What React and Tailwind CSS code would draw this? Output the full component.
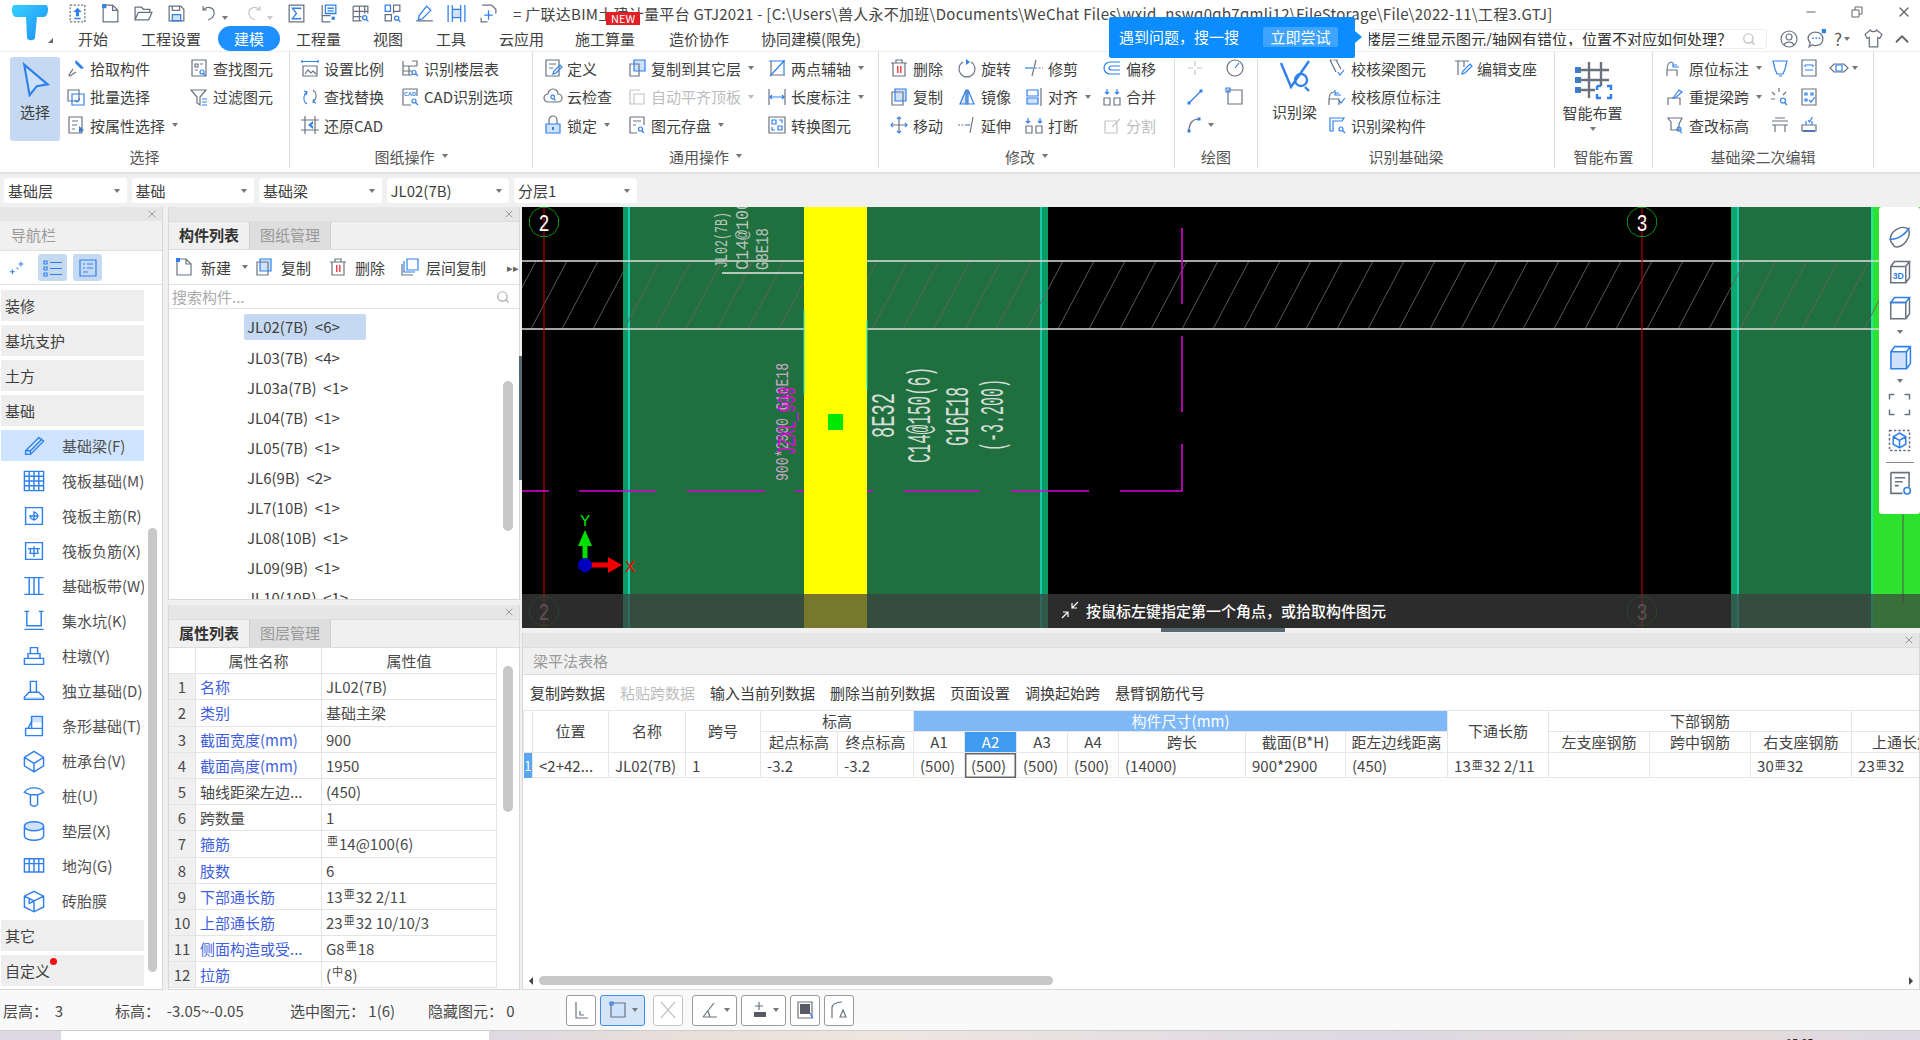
import { ChevronUp, Minus, Search, X } from 'lucide-react';

const ICONS = {
  upload: { d: 'M3 2h14v16H3z', n: 'M10 4.5l-4 4h2.5v4h3v-4H14zM7 14h6v1.5H7z' },
  newDoc: { g: 'M5 2h7l5 5v11H3V5M12 2v5h5', n: 'M2 1h4v4H2z' },
  open: { g: 'M2 16V4h6l2 2h6v3M2 16l3-7h13l-3 7z' },
  save: { g: 'M3 3h11l3 3v11H3zM6 3v4h7V3', f: 'M6 11h8v6H6z', b: 'M6 11h8v6H6z' },
  undo: { g: 'M4 7c5-5 12-2 11 4-.5 3-3 5-6 6M4 3v4h4' },
  redo: { g: 'M16 7c-5-5-12-2-11 4 .5 3 3 5 6 6M16 3v4h-4' },
  sigma: { g: 'M3 2h14v16H3z', b: 'M14 6V5H6l4 5-4 5h8v-1' },
  report: { g: 'M4 2v16h8M4 12h8', b: 'M7 2h10v8H7zM9 5h6M9 7.5h6', n: 'M13 13h3v3h-3z' },
  tableFind: { g: 'M3 3h14v7M3 3v14h8M3 8h14M3 13h8M9 3v14M14 3v7', b: 'M17.5 17.5l-2-2M16 14a2 2 0 1 1-4 0 2 2 0 0 1 4 0z' },
  treeFind: { g: 'M11 2h6v6h-6zM3 11h6v6H3zM11 8v2', b: 'M3 2h5v6H3zM17.5 18l-2-2M16 14.5a2 2 0 1 1-4 0 2 2 0 0 1 4 0z' },
  pen: { g: 'M2 17h16', b: 'M12 3l4 4-8 8-4 1 1-4z' },
  columns: { b: 'M2 2v16M18 2v16M6 2v16M14 2v16M6 6h8M6 14h8', f: 'M6 6h8v8H6z' },
  plusDoc: { g: 'M4 2h9l4 4v4M3 14v4h6', b: 'M10 7v9M6 11.5h8' },
  cursor: { b: 'M4 2l13 11-6 1-4 5z', f: 'M4 2l13 11-6 1-4 5z' },
  dropper: { g: 'M7 11l-4 6 1 1 6-4', n: 'M10 2l8 8-3 1-6-6z' },
  multi: { g: 'M2 3h11v11H2z', b: 'M6 7h12v11H6zM9 13l2 2 3-4' },
  attr: { g: 'M3 2h13v16H3zM6 6h6M6 10h5M6 14h3', n: 'M13 11l5 4-5 3z' },
  findDoc: { g: 'M3 2h14v16H3zM6 6h3v3H6zM11 6h3M6 12h3', b: 'M16.5 18l-2-2M15 14a2 2 0 1 1-4 0 2 2 0 0 1 4 0z' },
  filter: { g: 'M2 3h15l-6 7v8l-3-2v-6z', b: 'M13 12h5M13 15h5M13 18h5' },
  scale: { g: 'M3 8h14v10H3zM5 16l3-4 3 3 2-2 3 3', b: 'M2 2v3M18 2v3M2 3.5h16' },
  floorFind: { g: 'M3 3v14h9M3 8h14M3 13h9M9 8v9M12 3h5v5', b: 'M18 18l-2-2M16 14.5a2 2 0 1 1-4 0 2 2 0 0 1 4 0z' },
  swap: { g: 'M13 3c3 2 4 6 2 10l-2 2', b: 'M7 17c-3-2-4-6-2-10l2-2M4 4l3 1-1 3M16 16l-3-1 1-3' },
  cadFind: { g: 'M3 2h14v7M3 2v16h8', b: 'M18 18l-2-2M16 14a2 2 0 1 1-4 0 2 2 0 0 1 4 0z', t: ['CAD', 4, 9, 5.5] },
  restore: { g: 'M5 1v18M15 1v18M1 5h18M1 15h18', n: 'M13 6l-5 4 5 4v-3l-2-1 2-1z' },
  define: { g: 'M3 2h13v16H3zM6 6h7M6 10h4', b: 'M10 16l1-3 6-6 2 2-6 6z' },
  cloud: { g: 'M5 15a4 4 0 0 1 0-8 5 5 0 0 1 10 0 4 4 0 0 1 0 8z', b: 'M12.5 13.5l-1.5-1.5M11.5 10a1.8 1.8 0 1 1-3.6 0 1.8 1.8 0 0 1 3.6 0z' },
  lock: { g: 'M6 9V5a4 4 0 0 1 8 0v4', f: 'M3 9h14v9H3z', b: 'M3 9h14v9H3z', n: 'M9 12h2v3H9z' },
  copyLayer: { g: 'M3 6h9v12H3z', b: 'M7 2h11v11H7z', f: 'M7 2h11v11H7z' },
  alignTop: { l: 'M3 3h10M3 3v14h6M7 7h10v10H7z' },
  saveFind: { g: 'M3 2h14v8M3 2v16h7M6 6h8M6 10h3', b: 'M17 18l-2-2M15.5 14a2 2 0 1 1-4 0 2 2 0 0 1 4 0z' },
  axis: { g: 'M4 3v14h14', b: 'M3 18L17 3M2 3h16M17 2v15' },
  dimension: { g: 'M2 2v16M18 2v16', b: 'M3 10h14M5 8l-2 2 2 2M15 8l2 2-2 2' },
  convert: { g: 'M2 2h16v16H2z', b: 'M5 5h4v4H5zM11 11h4v4h-4zM12 5h3v3M8 15H5v-3' },
  trash: { g: 'M4 5h12v13H4zM2 5h16M7 5V2h6v3', r: 'M8 8h1.5v7H8zM11 8h1.5v7H11z' },
  copy: { g: 'M3 5h11v13H3z', f: 'M6 2h11v12H6z', b: 'M6 2h11v12H6z' },
  move: { g: 'M10 3v14M3 10h14', b: 'M8 4l2-2 2 2M8 16l2 2 2-2M4 8l-2 2 2 2M16 8l2 2-2 2' },
  rotate: { g: 'M6 4a8 8 0 1 0 8 0', n: 'M9 1l4 3-4 3z' },
  mirror: { g: 'M10 2v16', f: 'M9 3L3 17h6z', b: 'M11 3l6 14h-6zM9 3L3 17h6z' },
  extend: { d: 'M1 10h9', g: 'M16 2l-3 16', b: 'M10 10h3' },
  trim: { g: 'M12 2L8 18', b: 'M1 10h8', d: 'M11 10h8' },
  align: { f: 'M3 11h11v6H3z', b: 'M3 3h11v6H3zM3 11h11v6H3z', g: 'M17 1v18' },
  split: { g: 'M2 11h6v7H2zM12 11h6v7h-6z', b: 'M4 3v5M16 3v5M2 6l2 2 2-2M14 6l2 2 2-2' },
  offset: { b: 'M18 4H8a6 6 0 0 0 0 12h10M18 8H9a2 2 0 0 0 0 4h9' },
  merge: { g: 'M2 11h6v7H2zM12 11h6v7h-6z', b: 'M5 2v5M15 2v5M3 5l2 2 2-2M13 5l2 2 2-2' },
  divide: { l: 'M3 6h12v12H3zM10 12l8-8' },
  point: { l: 'M10 3v5M10 12v5M3 10h5M12 10h5' },
  circlePt: { g: 'M18 10a8 8 0 1 1-16 0 8 8 0 0 1 16 0z', b: 'M10 10l4-5' },
  line: { b: 'M4 16L16 4', n: 'M2.5 14.5h3v3h-3zM14.5 2.5h3v3h-3z' },
  square: { g: 'M3 3h14v14H3z', b: 'M1 1h4v4H1z' },
  arc: { g: 'M4 16C4 8 8 4 14 4', n: 'M2.5 14.5h3v3h-3zM12.5 2.5h3v3h-3z' },
  beamCheck: { g: 'M3 2l6 12M9 2l5 9', b: 'M11 14l2 3 4-5', d: 'M3 2h8' },
  spotCheck: { g: 'M2 18v-6h10v6M2 13c0-5 2-8 5-8', b: 'M12 13l2 3 4-5M8 3v5h6M8 6h4' },
  beamFind: { b: 'M3 3h14l-2 3H6v10H3zM18 18l-2-2M16 14a2 2 0 1 1-4 0 2 2 0 0 1 4 0z' },
  support: { g: 'M2 3h14M5 3v14M11 3v6', b: 'M9 16l1-3 7-7 2 2-7 7z' },
  smart: {
    g: 'M2 5h16M2 10h16M2 15h9M8 1v18M14 1v12',
    n: 'M1 3.5h3v3H1zM1 8.5h3v3H1zM1 13.5h3v3H1z',
    b: 'M12 13h2M17 13h2v2M19 17v2h-2M14 19h-2v-2M12 15v-2',
  },
  beamBig: { b: 'M3 3l5 12 9-13M17 17l-2-2M16 11.5a3 3 0 1 1-6 0 3 3 0 0 1 6 0z' },
  stretch: { g: 'M2 18v-6h10v6M2 12c0-5 2-8 5-8', b: 'M8 4v5h6M8 7h4' },
  reBeam: { g: 'M3 18v-7h12v7', b: 'M8 11l6-8 3 2-7 6z' },
  level: { g: 'M3 3h14l-3 6v6H6V7z', b: 'M17 18l-2-2M16 14a2 2 0 1 1-4 0 2 2 0 0 1 4 0z' },
  shield: { b: 'M3 3h14l-2 8-2 5h-6L5 11zM9 18h3' },
  slots: { g: 'M3 2h14v16H3z', b: 'M6 7h8M6 12h8M6 7v2M14 7v2' },
  eye: { g: 'M1 10l4-4h10l4 4-4 4H5z', b: 'M7 7h6v6H7z' },
  burst: { g: 'M9 1v4M2 5l3 3M16 5l-3 3M1 12h4', b: 'M17 18l-2-2M15.5 13.5a2.5 2.5 0 1 1-5 0 2.5 2.5 0 0 1 5 0z' },
  dotted: { g: 'M3 2h14v16H3z', b: 'M6 6h2v2H6zM12 6h2v2h-2zM6 12h2v2H6zM10 13l2 2 4-5' },
  stairs: { g: 'M2 6h16M2 10h16M5 10v7M15 10v7M5 3h10' },
  basin: { g: 'M3 10h14v6H3z', n: 'M4 15h12v2H4z', b: 'M9 5l1.5 2 3-5M7 10V6M13 10V6' },
  listNav: { b: 'M1 3h3v3H1zM1 9h3v3H1zM1 15h3v3H1zM7 4.5h12M7 10.5h12M7 16.5h12' },
  formNav: { b: 'M2 2h16v16H2zM5 6h2M9 6h6M5 10h2M9 10h6M5 14h5' },
  spark: { b: 'M4 12v6M1 15h6M14 3v6M11 6h6M9 10l2 2' },
  navBeam: { b: 'M3 14L14 3l4 3-11 11H3zM3 14h4v3M7 14L17 4M13 4l-2 2' },
  navRaft: { b: 'M2 2h16v16H2zM2 6h16M2 10h16M2 14h16M6 2v16M10 2v16M14 2v16' },
  navMain: { b: 'M3 3h14v14H3zM10 6v8M6 10h8M10 7a3 3 0 1 1-3 3' },
  navNeg: { b: 'M3 3h14v14H3zM10 6v9M5 8h10M6 12h8M7 8v4M13 8v4' },
  navStrip: { b: 'M2 3h16M2 17h16M6 3v14M10 3v14M14 3v14' },
  navPit: { b: 'M4 2v12h12V2M2 2h4M14 2h4M2 17h16' },
  navPier: { b: 'M7 3h6v5H7zM5 8h10v4H5zM2 12h16v5H2z' },
  navFoot: { b: 'M7 2h5v9H7zM2 15l4-4h8l4 4v2H2z', f: 'M2 15h16v2H2z' },
  navStripF: { b: 'M8 2h9v10H8zM3 12h14v6H3zM5 12l3-6', f: 'M8 2h9v5H8z' },
  navCap: { b: 'M10 2l8 5v7l-8 5-8-5V7zM2 7l8 5 8-5M10 12v7' },
  navPile: { b: 'M2 7c3-5 13-5 16 0l-5 2H7zM7 9v8c2 2 4 2 6 0V9' },
  navCushion: { b: 'M2 6c0-5 16-5 16 0v8c0 5-16 5-16 0zM2 6c0 5 16 5 16 0', f: 'M2 6c0-5 16-5 16 0 0 5-16 5-16 0z' },
  navTrench: { b: 'M2 4h16v11H2zM2 8h16M6 4v11M10 4v11M14 4v11' },
  navBrick: { b: 'M10 2l8 4v9l-8 4-8-4V6zM2 6l8 4 8-4M10 10v9M6 8v4l4-2' },
  orbit: { g: 'M3 14C1 6 12 0 17 4c3 6-4 16-11 14z', b: 'M2 12C8 13 14 9 18 3' },
  box3d: { g: 'M3 6h12v13H3zM3 6l3-4h12l-3 4M15 19l3-4V2', t: ['3D', 4.5, 16, 7] },
  boxPlain: { g: 'M3 6h12v13H3zM15 19l3-4V2', b: 'M3 6l3-4h12l-3 4z' },
  boxFill: { f: 'M3 6h12v13H3z', b: 'M3 6h12v13H3zM3 6l3-4h12v13l-3 4M15 6l3-4' },
  bracket: { g: 'M2 6V2h4M14 2h4v4M18 14v4h-4M6 18H2v-4' },
  dashCube: { d: 'M2 2h16v16H2z', b: 'M10 4l5 3v6l-5 3-5-3V7zM5 7l5 3 5-3M10 10v6' },
  listEye: { g: 'M3 2h14v11M3 2v16h9M6 6h8M6 9h6M6 12h3', b: 'M18 16a2.5 2.5 0 1 1-5 0 2.5 2.5 0 0 1 5 0z' },
  layerCopy: { g: 'M2 7v11h11', b: 'M7 2h11v11H7zM4 4v11h11' },
  user: { g: 'M18 10a8 8 0 1 1-16 0 8 8 0 0 1 16 0zM13 8a3 3 0 1 1-6 0 3 3 0 0 1 6 0zM5 16c2-4 8-4 10 0' },
  chat: { g: 'M2 10c0-8 14-8 14 0s-8 7-10 6l-3 2 1-4c-1-1-2-2-2-4z', n: 'M6 9h1.5v1.5H6zM9 9h1.5v1.5H9zM12 9h1.5v1.5H12zM15 1h4v4h-4z' },
  shirt: { g: 'M7 2L2 6l2 4 2-1v9h8V9l2 1 2-4-5-4c-1 2-5 2-6 0z' },
  shrink: { w: 'M2 18l6-6M8 17v-5H3M18 2l-6 6M12 3v5h5' },
  sbCorner: { g: 'M5 2v16h12M9 11v4h4' },
  sbRect: { g: 'M3 3h14v14H3z', b: 'M2 2h3v3H2z', f: 'M3 3h14v14H3z' },
  sbCross: { l: 'M3 2l14 16M17 2L3 18' },
  sbAngle: { g: 'M3 17h14M3 17L14 3M8 11l2 6' },
  sbTrack: { g: 'M10 2v8M6 6h8', k: 'M5 12h12v5H5z' },
  sbPrint: { g: 'M3 2h14v16H3z', k: 'M5 4h10v10H5z', b: 'M15 13l3 5' },
  sbCurve: { g: 'M3 18V8c0-3 3-6 10-6M14 10l3 7h-6z' },
};

function Ico({ i, s = 20, className = '' }) {
  const c = ICONS[i];
  return (
    <svg width={s} height={s} viewBox="0 0 20 20" fill="none" strokeWidth="1.2" className={`shrink-0 ${className}`}>
      {c.f && <path d={c.f} fill="#cfe2fb" />}
      {c.n && <path d={c.n} fill="#2f80ed" />}
      {c.r && <path d={c.r} fill="#e5484d" />}
      {c.k && <path d={c.k} fill="#555a64" />}
      {c.g && <path d={c.g} stroke="#6a7280" />}
      {c.b && <path d={c.b} stroke="#2f80ed" />}
      {c.l && <path d={c.l} stroke="#c4c4c4" />}
      {c.w && <path d={c.w} stroke="#ffffff" />}
      {c.d && <path d={c.d} stroke="#6a7280" strokeDasharray="2 1.5" />}
      {c.t && <text x={c.t[1]} y={c.t[2]} fontSize={c.t[3]} fontWeight="700" fontFamily="'Liberation Sans', sans-serif" fill="#2f80ed">{c.t[0]}</text>}
    </svg>
  );
}

function Caret({ gray }) {
  return <span className={`inline-block w-0 h-0 border-x-[3px] border-x-transparent border-t-[4px] ${gray ? 'border-t-[#bbbbbb]' : 'border-t-[#777777]'}`} />;
}

function Tool({ icon, label, caret, off }) {
  return (
    <div className={`h-[28.5px] flex items-center whitespace-nowrap ${off ? 'text-[#bdbdbd]' : ''}`}>
      <Ico i={icon} className="mr-[4px]" />
      <span>{label}</span>
      {caret && <span className="ml-[7px] flex items-center"><Caret gray={off} /></span>}
    </div>
  );
}

function RibbonGroup({ width, label, caret, children }) {
  return (
    <div className={`${width} shrink-0 flex flex-col border-r border-[#dcdcdc] mb-[4px]`}>
      <div className="h-[88px] flex pt-[2px] pl-[10px]">{children}</div>
      <div className="flex-1 flex items-center justify-center gap-[7px] text-[#555555] pt-[4px]">
        {label}
        {caret && <Caret />}
      </div>
    </div>
  );
}

function PanelStrip() {
  return (
    <div className="h-[14px] bg-[#e6e6e6] flex items-center justify-end pr-[4px] shrink-0">
      <X size={12} color="#9a9a9a" />
    </div>
  );
}

function Tabs({ a, b }) {
  return (
    <div className="h-[29px] bg-[#f0f0f0] border-y border-[#dddddd] flex shrink-0">
      <div className="w-[81px] flex items-center justify-center pb-[2px] font-bold text-[#333333] border-r border-[#cfcfcf]">{a}</div>
      <div className="w-[81px] flex items-center justify-center pb-[2px] text-[#999999] bg-[#dedede] border-r border-[#cfcfcf]">{b}</div>
    </div>
  );
}

function Rebar({ g = '亜' }) {
  return <span className="text-[11px] relative -top-[3px] mx-[1px]">{g}</span>;
}

const NAV = [
  ['navBeam', '基础梁(F)'], ['navRaft', '筏板基础(M)'], ['navMain', '筏板主筋(R)'], ['navNeg', '筏板负筋(X)'],
  ['navStrip', '基础板带(W)'], ['navPit', '集水坑(K)'], ['navPier', '柱墩(Y)'], ['navFoot', '独立基础(D)'],
  ['navStripF', '条形基础(T)'], ['navCap', '桩承台(V)'], ['navPile', '桩(U)'], ['navCushion', '垫层(X)'],
  ['navTrench', '地沟(G)'], ['navBrick', '砖胎膜'],
];

const MEMBERS = ['JL03(7B)  <4>', 'JL03a(7B)  <1>', 'JL04(7B)  <1>', 'JL05(7B)  <1>', 'JL6(9B)  <2>', 'JL7(10B)  <1>', 'JL08(10B)  <1>', 'JL09(9B)  <1>', 'JL10(10B)  <1>'];

const PROPS = [
  ['名称', 'JL02(7B)', true], ['类别', '基础主梁', true], ['截面宽度(mm)', '900', true], ['截面高度(mm)', '1950', true],
  ['轴线距梁左边...', '(450)', false], ['跨数量', '1', false],
  ['箍筋', <><Rebar g="亜" />14@100(6)</>, true], ['肢数', '6', true],
  ['下部通长筋', <>13<Rebar />32 2/11</>, true], ['上部通长筋', <>23<Rebar />32 10/10/3</>, true],
  ['侧面构造或受...', <>G8<Rebar />18</>, true], ['拉筋', <>(<Rebar g="中" />8)</>, true],
];

function Th({ className = '', ...rest }) {
  return <th className={`border border-[#e6e6e6] font-normal text-[#444444] p-0 pb-[2px] overflow-hidden whitespace-nowrap ${className}`} {...rest} />;
}

function Td({ className = '', children }) {
  return <td className={`border border-[#e6e6e6] pl-[6px] text-[#444444] overflow-hidden whitespace-nowrap ${className}`}>{children}</td>;
}

const HATCH = Array.from({ length: 48 }, (_, k) => 500 + k * 31);
const MONO = "'Liberation Mono', monospace";

function VText({ x, y, len, size = 34, fill = '#d4ddd7', children }) {
  return (
    <text transform={`translate(${x} ${y}) rotate(-90)`} fontFamily={MONO} fontSize={size} textLength={len} lengthAdjust="spacingAndGlyphs" fill={fill}>
      {children}
    </text>
  );
}

function Bubble({ x, y, n, dim }) {
  const pts = Array.from({ length: 12 }, (_, k) => {
    const a = (k * Math.PI) / 6 + Math.PI / 12;
    return `${x + 15 * Math.cos(a)},${y + 15 * Math.sin(a)}`;
  }).join(' ');
  return (
    <g opacity={dim ? 0.5 : 1}>
      <polygon points={pts} fill="none" stroke="#0a8a0a" />
      <text x={x} y={y + 9} textAnchor="middle" fontFamily={MONO} fontSize="24" fill="#ffffff" textLength="11" lengthAdjust="spacingAndGlyphs">{n}</text>
    </g>
  );
}

function CadCanvas() {
  return (
    <svg viewBox="522 207 1398 421" width="1398" height="421" className="block">
      <rect x="522" y="207" width="1398" height="421" fill="#000000" />
      <rect x="623" y="207" width="425" height="421" fill="#20703f" />
      <rect x="623" y="207" width="6" height="421" fill="#0b9a66" />
      <rect x="1042" y="207" width="6" height="421" fill="#0b9a66" />
      <rect x="1731" y="207" width="140" height="421" fill="#20703f" />
      <rect x="1731" y="207" width="6" height="421" fill="#0ba870" />
      <rect x="1871" y="207" width="49" height="421" fill="#2de22d" />
      <path d="M629 207v421M1041 207v421M1738 207v421M1872 207v421" stroke="#19e6d2" strokeWidth="1.5" />
      <path d="M1903 514v90" stroke="#555555" />
      <g stroke="#626262" strokeWidth="0.9">
        {HATCH.map((x) => <path key={x} d={`M${x} 329L${x + 36} 261`} />)}
      </g>
      <path d="M522 261H1920M522 329H1920" stroke="#dcdcdc" strokeWidth="1.5" />
      <path d="M544 207V628M1642 207V628" stroke="#b00000" strokeWidth="1.2" />
      <rect x="804" y="207" width="63" height="421" fill="#ffff00" />
      <path d="M804 310v84M867 320v70" stroke="#19e6d2" />
      <path d="M722 273H803" stroke="#e6e6e6" strokeWidth="1.5" />
      <path d="M522 491h27M579 491h77M687 491h78M795 491h9M867 491h6M904 491h76M1011 491h78M1120 491h62V444M1182 412V336M1182 304V228" stroke="#d800d8" strokeWidth="1.6" fill="none" />
      <Bubble x={544} y={222} n="2" />
      <Bubble x={1642} y={222} n="3" />
      <VText x={727} y={268} len={56} size={18} fill="#b8c4bc">JL02(7B)</VText>
      <VText x={748} y={270} len={70} size={18} fill="#b8c4bc">C14@100</VText>
      <VText x={768} y={270} len={42} size={18} fill="#b8c4bc">G8E18</VText>
      <VText x={788} y={481} len={118} size={18} fill="#c9a6c4">900*2900 G10E18</VText>
      <VText x={795} y={455} len={68} size={26} fill="#e000e0">JZXL_900</VText>
      <VText x={894} y={438} len={45}>8E32</VText>
      <VText x={930} y={463} len={96}>C14@150(6)</VText>
      <VText x={968} y={446} len={59}>G16E18</VText>
      <VText x={1003} y={451} len={72}>(-3.200)</VText>
      <rect x="828" y="414" width="15" height="16" fill="#00e800" />
      <path d="M585 560V545" stroke="#00e000" strokeWidth="5" />
      <path d="M578 546l7-16 7 16z" fill="#00e000" />
      <path d="M590 565H610" stroke="#f00000" strokeWidth="5" />
      <path d="M608 557l14 8-14 8z" fill="#f00000" />
      <circle cx="585" cy="565" r="7" fill="#0000c0" />
      <text x="585" y="526" textAnchor="middle" fontFamily={MONO} fontSize="17" fill="#00e000">Y</text>
      <text x="630" y="572" textAnchor="middle" fontFamily={MONO} fontSize="17" fill="#f00000">X</text>
      <Bubble x={544} y={611} n="2" dim />
      <Bubble x={1642} y={611} n="3" dim />
    </svg>
  );
}

function SideBar() {
  return (
    <div className="absolute right-0 top-0 w-[41px] h-[307px] bg-white rounded-[3px] flex flex-col items-center pt-[17px]">
      <Ico i="orbit" s={25} className="mb-[10px]" />
      <Ico i="box3d" s={25} className="mb-[11px]" />
      <Ico i="boxPlain" s={25} className="mb-[10px]" />
      <span className="mb-[10px] flex"><Caret /></span>
      <Ico i="boxFill" s={26} className="mb-[9px]" />
      <span className="mb-[9px] flex"><Caret /></span>
      <Ico i="bracket" s={25} className="mb-[11px]" />
      <Ico i="dashCube" s={25} className="mb-[9px]" />
      <div className="w-[28px] h-px bg-[#8a8a8a] mb-[7px]" />
      <Ico i="listEye" s={26} />
    </div>
  );
}

export default function App() {
  return (
    <div className="w-[1920px] h-[1040px] overflow-hidden bg-white flex flex-col text-[15px] leading-none text-[#3f3f3f] font-['Noto_Sans_CJK_SC','Liberation_Sans',sans-serif] relative">
      {/* title + tabs */}
      <div className="h-[52px] flex shrink-0 border-b border-[#eeeeee]">
        <div className="w-[78px] shrink-0 relative">
          <svg width="48" height="44" viewBox="0 0 48 44" className="ml-[8px] mt-[2px]">
            <defs>
              <linearGradient id="logoT" x1="0" y1="0" x2="1" y2="1">
                <stop offset="0" stopColor="#34d0ff" />
                <stop offset="1" stopColor="#1e8df5" />
              </linearGradient>
            </defs>
            <path d="M6 3h32c3 0 3 11-2 12H29l-2 21c-1 3-7 3-8 0l-1-21H8C3 15 3 3 6 3z" fill="url(#logoT)" />
          </svg>
          <span className="absolute left-[48px] bottom-[8px] w-0 h-0 border-l-[5px] border-l-transparent border-b-[5px] border-b-[#666666]" />
        </div>
        <div className="flex-1 flex flex-col min-w-0">
          <div className="h-[26px] flex items-center relative -ml-[11px]">
            {['upload', 'newDoc', 'open', 'save'].map((i) => <Ico key={i} i={i} s={21} className="mr-[12px]" />)}
            <Ico i="undo" s={20} />
            <span className="ml-[3px] mr-[16px]"><Caret /></span>
            <span className="opacity-40 flex items-center mr-[13px]">
              <Ico i="redo" s={20} />
              <span className="ml-[3px]"><Caret /></span>
            </span>
            {['sigma', 'report', 'tableFind', 'treeFind', 'pen', 'columns', 'plusDoc'].map((i) => <Ico key={i} i={i} s={21} className="mr-[11px]" />)}
            <span className="ml-[3px] text-[#444444] whitespace-nowrap tracking-[0.27px]">= 广联达BIM土建计量平台 GTJ2021 - [C:\Users\兽人永不加班\Documents\WeChat Files\wxid_nswq0qb7qmli12\FileStorage\File\2022-11\工程3.GTJ]</span>
            <span className="absolute left-[539px] top-[12px] w-[34px] h-[13px] bg-[#e01f26] text-white text-[11px] flex items-center justify-center">NEW</span>
            <div className="absolute right-[8px] top-[4px] flex items-center gap-[32px] text-[#666666]">
              <Minus size={14} />
              <svg width="14" height="14" viewBox="0 0 14 14" fill="none" stroke="#666666"><path d="M2 5h7v7H2zM5 5V2h7v7H9" /></svg>
              <X size={16} />
            </div>
          </div>
          <div className="h-[25px] flex items-center whitespace-nowrap">
            <span className="w-[63px]">开始</span>
            <span className="w-[77px]">工程设置</span>
            <span className="w-[62px] h-[25px] rounded-full bg-[#1e90ff] text-white flex items-center justify-center mr-[16px]">建模</span>
            <span className="w-[77px]">工程量</span>
            <span className="w-[63px]">视图</span>
            <span className="w-[63px]">工具</span>
            <span className="w-[76px]">云应用</span>
            <span className="w-[94px]">施工算量</span>
            <span className="w-[92px]">造价协作</span>
            <span>协同建模(限免)</span>
            <div className="ml-auto mr-[7px] flex items-center">
              <div className="w-[399px] h-[20px] mr-[12px] border border-[#eeeeee] rounded-[3px] flex items-center pr-[10px] overflow-hidden">
                <span className="flex-1 overflow-hidden -ml-[3px] text-[#333333] whitespace-nowrap">楼层三维显示图元/轴网有错位，位置不对应如何处理？</span>
                <Search size={14} color="#bbbbbb" />
              </div>
              <div className="flex items-center gap-[7px]">
                <Ico i="user" s={20} />
                <Ico i="chat" s={21} />
                <span className="text-[#555555] text-[17px] flex items-center gap-[2px] w-[22px]">?<Caret /></span>
                <Ico i="shirt" s={21} />
                <ChevronUp size={22} color="#666666" />
              </div>
            </div>
          </div>
        </div>
      </div>

      {/* tip bubble over the title bar */}
      <div className="absolute left-[1109px] top-[17px] w-[246px] h-[41px] bg-[#0b8cff] rounded-[2px] flex items-center pl-[10px] pb-[2px] text-white z-10">
        <span className="w-[144px]">遇到问题，搜一搜</span>
        <span className="w-[75px] h-[20px] bg-[#3ea4ff] rounded-[2px] flex items-center justify-center">立即尝试</span>
        <span className="absolute -right-[7px] top-[14px] w-0 h-0 border-y-[6px] border-y-transparent border-l-[7px] border-l-[#0b8cff]" />
      </div>

      {/* ribbon */}
      <div className="h-[120px] flex shrink-0">
        <RibbonGroup width="w-[290px]" label="选择">
          <div className="w-[50px] h-[84px] mt-[3px] rounded-[3px] bg-[#c5daf2] flex flex-col items-center pt-[4px] gap-[7px]">
            <Ico i="cursor" s={36} />
            <span>选择</span>
          </div>
          <div className="w-[123px] ml-[6px]">
            <Tool icon="dropper" label="拾取构件" />
            <Tool icon="multi" label="批量选择" />
            <Tool icon="attr" label="按属性选择" caret />
          </div>
          <div>
            <Tool icon="findDoc" label="查找图元" />
            <Tool icon="filter" label="过滤图元" />
          </div>
        </RibbonGroup>
        <RibbonGroup width="w-[243px]" label="图纸操作" caret>
          <div className="w-[100px]">
            <Tool icon="scale" label="设置比例" />
            <Tool icon="swap" label="查找替换" />
            <Tool icon="restore" label="还原CAD" />
          </div>
          <div>
            <Tool icon="floorFind" label="识别楼层表" />
            <Tool icon="cadFind" label="CAD识别选项" />
          </div>
        </RibbonGroup>
        <RibbonGroup width="w-[346px]" label="通用操作" caret>
          <div className="w-[84px]">
            <Tool icon="define" label="定义" />
            <Tool icon="cloud" label="云检查" />
            <Tool icon="lock" label="锁定" caret />
          </div>
          <div className="w-[140px]">
            <Tool icon="copyLayer" label="复制到其它层" caret />
            <Tool icon="alignTop" label="自动平齐顶板" caret off />
            <Tool icon="saveFind" label="图元存盘" caret />
          </div>
          <div>
            <Tool icon="axis" label="两点辅轴" caret />
            <Tool icon="dimension" label="长度标注" caret />
            <Tool icon="convert" label="转换图元" />
          </div>
        </RibbonGroup>
        <RibbonGroup width="w-[296px]" label="修改" caret>
          <div className="w-[68px]">
            <Tool icon="trash" label="删除" />
            <Tool icon="copy" label="复制" />
            <Tool icon="move" label="移动" />
          </div>
          <div className="w-[67px]">
            <Tool icon="rotate" label="旋转" />
            <Tool icon="mirror" label="镜像" />
            <Tool icon="extend" label="延伸" />
          </div>
          <div className="w-[78px]">
            <Tool icon="trim" label="修剪" />
            <Tool icon="align" label="对齐" caret />
            <Tool icon="split" label="打断" />
          </div>
          <div>
            <Tool icon="offset" label="偏移" />
            <Tool icon="merge" label="合并" />
            <Tool icon="divide" label="分割" off />
          </div>
        </RibbonGroup>
        <RibbonGroup width="w-[83px]" label="绘图">
          <div className="w-[40px]">
            <div className="h-[28.5px] flex items-center"><Ico i="point" /></div>
            <div className="h-[28.5px] flex items-center"><Ico i="line" /></div>
            <div className="h-[28.5px] flex items-center gap-[3px]"><Ico i="arc" /><Caret /></div>
          </div>
          <div>
            <div className="h-[28.5px] flex items-center"><Ico i="circlePt" /></div>
            <div className="h-[28.5px] flex items-center"><Ico i="square" /></div>
          </div>
        </RibbonGroup>
        <RibbonGroup width="w-[297px]" label="识别基础梁">
          <div className="w-[59px] flex flex-col items-center pt-[3px] pr-[6px] gap-[7px]">
            <Ico i="beamBig" s={40} />
            <span>识别梁</span>
          </div>
          <div className="w-[126px]">
            <Tool icon="beamCheck" label="校核梁图元" />
            <Tool icon="spotCheck" label="校核原位标注" />
            <Tool icon="beamFind" label="识别梁构件" />
          </div>
          <div>
            <Tool icon="support" label="编辑支座" />
          </div>
        </RibbonGroup>
        <RibbonGroup width="w-[98px]" label="智能布置">
          <div className="-ml-[10px] w-full flex flex-col items-center pt-[6px] pr-[12px] gap-[5px]">
            <Ico i="smart" s={40} />
            <span>智能布置</span>
            <span className="mt-[2px] flex"><Caret /></span>
          </div>
        </RibbonGroup>
        <RibbonGroup width="w-[221px]" label="基础梁二次编辑">
          <div className="pl-[2px] w-[107px]">
            <Tool icon="stretch" label="原位标注" caret />
            <Tool icon="reBeam" label="重提梁跨" caret />
            <Tool icon="level" label="查改标高" />
          </div>
          <div className="w-[29px]">
            <div className="h-[28.5px] flex items-center"><Ico i="shield" /></div>
            <div className="h-[28.5px] flex items-center"><Ico i="burst" /></div>
            <div className="h-[28.5px] flex items-center"><Ico i="stairs" /></div>
          </div>
          <div className="w-[30px]">
            <div className="h-[28.5px] flex items-center"><Ico i="slots" /></div>
            <div className="h-[28.5px] flex items-center"><Ico i="dotted" /></div>
            <div className="h-[28.5px] flex items-center"><Ico i="basin" /></div>
          </div>
          <div className="h-[28.5px] flex items-center gap-[3px]"><Ico i="eye" /><Caret /></div>
        </RibbonGroup>
      </div>

      {/* combos */}
      <div className="h-[35px] shrink-0 bg-[#f0f0f0] border-t-2 border-[#e2e2e2] flex items-center pl-[4px] gap-[5px]">
        {['基础层', '基础', '基础梁', 'JL02(7B)', '分层1'].map((t) => (
          <div key={t} className="w-[122.5px] h-[25px] bg-white rounded-[3px] flex items-center justify-between pl-[4px] pr-[7px]">
            {t}
            <Caret />
          </div>
        ))}
      </div>

      {/* main */}
      <div className="flex-1 min-h-0 flex bg-[#f0f0f0] relative">
        {/* nav */}
        <div className="w-[163px] shrink-0 bg-white border-r border-[#d8d8d8] border-b flex flex-col overflow-hidden relative">
          <PanelStrip />
          <div className="h-[29px] bg-[#f0f0f0] flex items-center pl-[11px] pb-[3px] text-[#999999] shrink-0">导航栏</div>
          <div className="h-[35px] border-y border-[#e0e0e0] flex items-center pl-[9px] shrink-0">
            <Ico i="spark" s={17} className="mr-[12px]" />
            <span className="w-[29px] h-[27px] rounded-[3px] bg-[#c5daf2] flex items-center justify-center mr-[6px]"><Ico i="listNav" /></span>
            <span className="w-[29px] h-[27px] rounded-[3px] bg-[#c5daf2] flex items-center justify-center"><Ico i="formNav" /></span>
          </div>
          <div className="pt-[5px] w-[144px] pl-[1px] flex flex-col gap-[4px]">
            {['装修', '基坑支护', '土方', '基础'].map((t) => (
              <div key={t} className="h-[31px] bg-[#eeeeee] flex items-center pl-[4px] pb-[1px]">{t}</div>
            ))}
            <div>
              {NAV.map(([icon, label], k) => (
                <div key={label} className={`h-[31px] mb-[4px] flex items-center pl-[21px] whitespace-nowrap overflow-hidden text-[#505050] ${k === 0 ? 'bg-[#cfe5ff]' : ''}`}>
                  <Ico i={icon} s={24} className="mr-[16px]" />
                  {label}
                </div>
              ))}
            </div>
            <div className="h-[31px] bg-[#eeeeee] flex items-center pl-[4px] -mt-[4px]">其它</div>
            <div className="h-[31px] bg-[#eeeeee] flex items-center pl-[4px] relative">
              自定义
              <span className="absolute left-[49px] top-[3px] w-[7px] h-[7px] rounded-full bg-[#ee1111]" />
            </div>
          </div>
          <div className="absolute left-[148px] top-[321px] w-[9px] h-[444px] bg-[#c8c8c8] rounded-full" />
        </div>

        {/* component panels */}
        <div className="w-[352px] ml-[5px] shrink-0 flex flex-col gap-[5px]">
          <div className="h-[393px] bg-white border-x border-b border-[#d8d8d8] flex flex-col overflow-hidden relative">
            <PanelStrip />
            <Tabs a="构件列表" b="图纸管理" />
            <div className="h-[35px] flex items-center pl-[5px] border-b border-[#e4e4e4] shrink-0 whitespace-nowrap">
              <Ico i="newDoc" className="mr-[7px]" />
              <span className="mr-[11px]">新建</span>
              <Caret />
              <span className="w-[17px]" />
              <Ico i="copy" className="mr-[7px]" />
              <span className="mr-[17px]">复制</span>
              <Ico i="trash" className="mr-[7px]" />
              <span className="mr-[15px]">删除</span>
              <Ico i="layerCopy" className="mr-[6px]" />
              <span>层间复制</span>
              <span className="ml-[21px] text-[11px] text-[#666666]">▸▸</span>
            </div>
            <div className="h-[24px] flex items-center justify-between pl-[3px] pr-[9px] text-[#aaaaaa] border-b border-[#e4e4e4] shrink-0">
              搜索构件...
              <Search size={14} color="#aaaaaa" />
            </div>
            <div className="pl-[75px] pt-[5px] whitespace-pre">
              <div className="w-[122px] h-[26px] bg-[#c5daf2] rounded-[2px] flex items-center pl-[3px] pb-[1px] mb-[2px]">JL02(7B)  &lt;6&gt;</div>
              {MEMBERS.map((m) => <div key={m} className="h-[30px] flex items-center pl-[3px]">{m}</div>)}
            </div>
            <div className="absolute left-[334px] top-[174px] w-[10px] h-[150px] bg-[#c8c8c8] rounded-full" />
          </div>

          <div className="flex-1 min-h-0 bg-white border-x border-b border-[#d8d8d8] flex flex-col overflow-hidden relative">
            <PanelStrip />
            <Tabs a="属性列表" b="图层管理" />
            <div className="w-[328px] grid grid-cols-[27px_126px_175px] auto-rows-[26.2px] text-[#4a4a4a]">
              <div className="border-b border-r border-[#e4e4e4]" />
              <div className="border-b border-r border-[#e4e4e4] flex items-center justify-center">属性名称</div>
              <div className="border-b border-r border-[#e4e4e4] flex items-center justify-center">属性值</div>
              {PROPS.map(([name, value, linked], k) => (
                <div key={name} className="contents">
                  <div className="border-b border-r border-[#e4e4e4] bg-[#f0f0f0] flex items-center justify-center">{k + 1}</div>
                  <div className={`border-b border-r border-[#e4e4e4] flex items-center pl-[4px] whitespace-nowrap overflow-hidden ${linked ? 'text-[#3f5fe0]' : ''}`}>{name}</div>
                  <div className="border-b border-r border-[#e4e4e4] flex items-center pl-[4px] whitespace-nowrap">{value}</div>
                </div>
              ))}
            </div>
            <div className="absolute left-[334px] top-[61px] w-[10px] h-[146px] bg-[#c8c8c8] rounded-full" />
          </div>
        </div>

        {/* splitter handle on the canvas edge */}
        <div className="absolute left-[519px] top-[149px] w-[3px] h-[124px] bg-[#5a6a75]" />

        {/* canvas + table */}
        <div className="flex-1 min-w-0 ml-[2px] flex flex-col">
          <div className="h-[421px] shrink-0 relative overflow-hidden">
            <CadCanvas />
            <div className="absolute left-0 right-0 bottom-0 h-[34px] bg-[rgba(63,63,63,0.7)] flex items-center pl-[538px] pb-[2px] text-white font-medium">
              <Ico i="shrink" s={20} className="mr-[6px]" />
              按鼠标左键指定第一个角点，或拾取构件图元
            </div>
            <SideBar />
          </div>
          <div className="h-[5px] shrink-0 flex">
            <div className="w-[124px] h-[4px] ml-[639px] bg-[#5a6a75]" />
          </div>
          <div className="flex-1 min-h-0 bg-white border-x border-b border-[#d8d8d8] flex flex-col overflow-hidden">
            <PanelStrip />
            <div className="h-[28px] bg-[#f0f0f0] border-y border-[#dddddd] flex items-center pl-[10px] pb-[2px] text-[#999999] shrink-0">梁平法表格</div>
            <div className="h-[35px] flex items-center pl-[7px] gap-[15px] shrink-0 whitespace-nowrap text-[#3a3a3a]">
              <span>复制跨数据</span>
              <span className="text-[#bdbdbd]">粘贴跨数据</span>
              <span>输入当前列数据</span>
              <span>删除当前列数据</span>
              <span>页面设置</span>
              <span>调换起始跨</span>
              <span>悬臂钢筋代号</span>
            </div>
            <div className="flex-1 min-h-0 overflow-hidden">
              <table className="table-fixed w-[1397px] border-collapse text-[15px]">
                <colgroup>
                  <col className="w-[9px]" />
                  <col className="w-[76px]" />
                  <col className="w-[77px]" />
                  <col className="w-[75px]" />
                  <col className="w-[77px]" />
                  <col className="w-[76px]" />
                  <col className="w-[51px]" />
                  <col className="w-[52px]" />
                  <col className="w-[51px]" />
                  <col className="w-[51px]" />
                  <col className="w-[127px]" />
                  <col className="w-[100px]" />
                  <col className="w-[102px]" />
                  <col className="w-[101px]" />
                  <col className="w-[101px]" />
                  <col className="w-[101px]" />
                  <col className="w-[101px]" />
                  <col className="w-[69px]" />
                </colgroup>
                <thead>
                  <tr className="h-[21px]">
                    <Th rowSpan={2} />
                    <Th rowSpan={2}>位置</Th>
                    <Th rowSpan={2}>名称</Th>
                    <Th rowSpan={2}>跨号</Th>
                    <Th colSpan={2}>标高</Th>
                    <Th colSpan={7} className="bg-[#7eb8f7] !text-white font-medium">构件尺寸(mm)</Th>
                    <Th rowSpan={2}>下通长筋</Th>
                    <Th colSpan={3}>下部钢筋</Th>
                    <Th />
                  </tr>
                  <tr className="h-[21px]">
                    <Th>起点标高</Th>
                    <Th>终点标高</Th>
                    <Th>A1</Th>
                    <Th className="bg-[#3f9bf0] !text-white font-medium">A2</Th>
                    <Th>A3</Th>
                    <Th>A4</Th>
                    <Th>跨长</Th>
                    <Th>截面(B*H)</Th>
                    <Th>距左边线距离</Th>
                    <Th>左支座钢筋</Th>
                    <Th>跨中钢筋</Th>
                    <Th>右支座钢筋</Th>
                    <Th className="text-left pl-[20px]">上通长筋</Th>
                  </tr>
                </thead>
                <tbody>
                  <tr className="h-[25px]">
                    <td className="bg-[#5aa5ef] text-white text-[13px] text-center p-0 overflow-hidden">1</td>
                    <Td>&lt;2+42...</Td>
                    <Td>JL02(7B)</Td>
                    <Td>1</Td>
                    <Td>-3.2</Td>
                    <Td>-3.2</Td>
                    <Td>(500)</Td>
                    <td className="pl-[6px] text-[#444444] shadow-[inset_0_0_0_1.5px_#666666]">(500)</td>
                    <Td>(500)</Td>
                    <Td>(500)</Td>
                    <Td>(14000)</Td>
                    <Td>900*2900</Td>
                    <Td>(450)</Td>
                    <Td>13<Rebar />32 2/11</Td>
                    <Td />
                    <Td />
                    <Td>30<Rebar />32</Td>
                    <Td>23<Rebar />32</Td>
                  </tr>
                </tbody>
              </table>
            </div>
            <div className="h-[17px] shrink-0 flex items-center pl-[6px] pr-[6px]">
              <span className="w-0 h-0 border-y-[4px] border-y-transparent border-r-[4px] border-r-[#444444] mr-[6px]" />
              <div className="w-[514px] h-[9px] rounded-full bg-[#c8c8c8]" />
              <span className="ml-auto w-0 h-0 border-y-[4px] border-y-transparent border-l-[4px] border-l-[#444444]" />
            </div>
          </div>
        </div>
      </div>

      {/* status bar */}
      <div className="h-[40px] shrink-0 bg-[#f9f9f9] flex items-center pl-[3px] text-[#4a4a4a] whitespace-nowrap">
        <span className="w-[112px]">层高：&nbsp;&nbsp;3</span>
        <span className="w-[175px]">标高：&nbsp;&nbsp;-3.05~-0.05</span>
        <span className="w-[138px]">选中图元：&nbsp;1(6)</span>
        <span className="w-[138px]">隐藏图元：&nbsp;0</span>
        <div className="flex items-center gap-[4px]">
          <span className="w-[30px] h-[31px] border border-[#9a9a9a] rounded-[3px] bg-white flex items-center justify-center"><Ico i="sbCorner" /></span>
          <span className="w-[45px] h-[31px] border border-[#3f8fe8] rounded-[3px] bg-[#d4e5fa] flex items-center justify-center gap-[4px]"><Ico i="sbRect" /><Caret /></span>
          <span className="w-[30px] h-[31px] ml-[4px] border border-[#c4c4c4] rounded-[3px] bg-white flex items-center justify-center"><Ico i="sbCross" /></span>
          <span className="w-[45px] h-[31px] ml-[5px] border border-[#9a9a9a] rounded-[3px] bg-white flex items-center justify-center gap-[4px]"><Ico i="sbAngle" /><Caret /></span>
          <span className="w-[45px] h-[31px] border border-[#9a9a9a] rounded-[3px] bg-white flex items-center justify-center gap-[4px]"><Ico i="sbTrack" /><Caret /></span>
          <span className="w-[30px] h-[31px] border border-[#9a9a9a] rounded-[3px] bg-white flex items-center justify-center"><Ico i="sbPrint" /></span>
          <span className="w-[30px] h-[31px] border border-[#9a9a9a] rounded-[3px] bg-white flex items-center justify-center"><Ico i="sbCurve" /></span>
        </div>
      </div>

      {/* desktop sliver below the window */}
      <div className="h-[10px] shrink-0 bg-[linear-gradient(90deg,#dcd8e4_0%,#dcd8e4_24%,#eadfd8_36%,#f0e6e0_46%,#dcd8e4_72%,#e8dcd8_88%,#dcd8e4_100%)] flex border-t border-[#cccccc] overflow-hidden">
        <div className="w-[428px] ml-[61px] bg-white" />
        <span className="ml-[1297px] text-[11px] leading-none text-[#222222] pt-[6px]">15:05</span>
      </div>
    </div>
  );
}
